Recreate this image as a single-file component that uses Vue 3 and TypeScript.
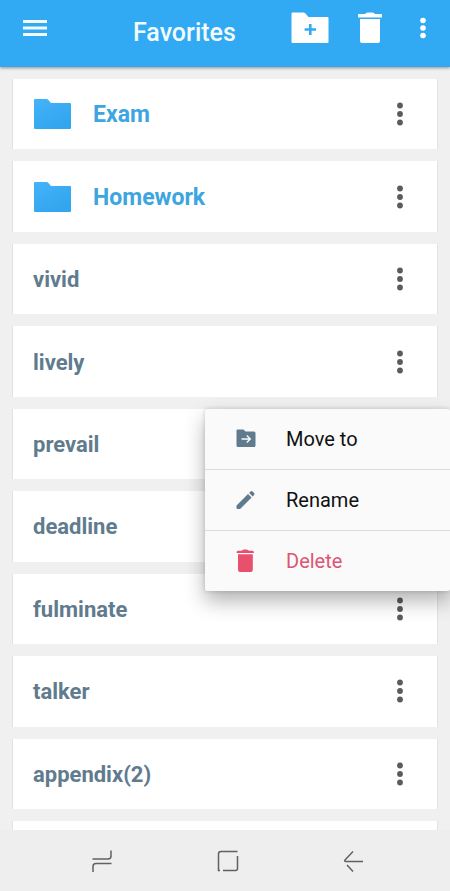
<script setup lang="ts">
import { ref } from 'vue'

interface Entry {
  name: string
  folder?: boolean
}

const entries: Entry[] = [
  { name: 'Exam', folder: true },
  { name: 'Homework', folder: true },
  { name: 'vivid' },
  { name: 'lively' },
  { name: 'prevail' },
  { name: 'deadline' },
  { name: 'fulminate' },
  { name: 'talker' },
  { name: 'appendix(2)' },
]

const openMenu = ref<string | null>('prevail')

function toggleMenu(name: string) {
  openMenu.value = openMenu.value === name ? null : name
}
</script>

<template>
  <div class="screen">
    <header class="app-bar">
      <button type="button" aria-label="Open navigation">
        <svg width="24" height="18" viewBox="0 0 24 18" fill="#f2fcff">
          <path d="M0 1h24v3H0zM0 7.5h24v3H0zM0 14h24v3H0z" />
        </svg>
      </button>
      <h1>Favorites</h1>
      <div class="actions">
        <button type="button" aria-label="New folder">
          <svg width="38" height="32" viewBox="0 0 38 32">
            <path fill="#fff" d="M1.5 0.5h11q1 0 1.7.8l3.3 3.7H36.500q1 0 1 1v24q0 1-1 1h-35q-1 0-1-1v-28.500q0-1 1-1z" />
            <path fill="#31a9f3" d="M18 12h2.600v4.200H25v2.600h-4.400V23H18v-4.200h-4.400v-2.600H18z" />
          </svg>
        </button>
        <button type="button" aria-label="Delete all">
          <svg width="24" height="32" viewBox="0 0 24 32" fill="#fff">
            <path d="M1 2h6q1-1.500 2.500-1.500h5q1.500 0 2.500 1.500h6q1 0 1 1v2.500H0V3q0-1 1-1z" />
            <path d="M2 7h20v22q0 2-2 2H4q-2 0-2-2z" />
          </svg>
        </button>
        <button type="button" aria-label="More options">
          <svg width="8" height="22" viewBox="0 0 8 22" fill="#fff">
            <circle cx="4" cy="3.500" r="2.800" />
            <circle cx="4" cy="11" r="2.800" />
            <circle cx="4" cy="18.500" r="2.800" />
          </svg>
        </button>
      </div>
    </header>

    <main class="content">
      <ul class="list">
        <li v-for="entry in entries" :key="entry.name" class="card">
          <svg v-if="entry.folder" class="folder-icon" width="38" height="32" viewBox="0 0 38 32">
            <defs>
              <linearGradient :id="'tone-' + entry.name" x1="0" y1="0" x2="0.600" y2="1">
                <stop offset="0" stop-color="#45b3fa" />
                <stop offset="1" stop-color="#31a5ee" />
              </linearGradient>
            </defs>
            <path
              :fill="`url(#tone-${entry.name})`"
              d="M2 1H13.500q1 0 1.700.8L18 5H37q1 0 1 1v24q0 1-1 1h-35q-1 0-1-1V2q0-1 1-1z"
            />
          </svg>
          <span class="name" :class="{ 'folder-name': entry.folder }">{{ entry.name }}</span>
          <button type="button" class="more" :aria-label="`Options for ${entry.name}`" @click="toggleMenu(entry.name)">
            <svg width="8" height="24" viewBox="0 0 8 24" fill="#5b5b5b">
              <circle cx="4" cy="3.500" r="2.900" />
              <circle cx="4" cy="12" r="2.900" />
              <circle cx="4" cy="20.500" r="2.900" />
            </svg>
          </button>

          <div v-if="openMenu === entry.name" class="menu" role="menu">
            <button type="button" role="menuitem">
              <svg width="20" height="24" viewBox="0 0 20 24">
                <path fill="#617b8e" d="M1.500 2.500h6l2 2H18q1.500 0 1.500 1.500v12.500q0 1.500-1.500 1.500H2q-1.500 0-1.500-1.500V3.500q0-1 1-1z" />
                <path fill="none" stroke="#fafafa" stroke-width="1.400" d="M5.500 12h8.500M10.800 8.500l3.500 3.500-3.500 3.500" />
              </svg>
              Move to
            </button>
            <button type="button" role="menuitem">
              <svg width="20" height="24" viewBox="0 0 20 24" fill="#617b8e">
                <path d="M.500 17.500 12 6l3.600 3.600L4.100 21H1.500q-1 0-1-1zM13.100 4.900l1.400-1.400q1-1 2 0l1.600 1.600q1 1 0 2l-1.400 1.400z" />
              </svg>
              Rename
            </button>
            <button type="button" role="menuitem" class="danger">
              <svg width="20" height="24" viewBox="0 0 20 24" fill="#e9506e">
                <path d="M2 1.800h3.500Q7 .500 8.500.500h1.500q1.500 0 3 1.300h3.500q1.500 0 1.500 2.200H.500q0-2.200 1.500-2.200z" />
                <path d="M2 5.200h14.800V21q0 2-2 2H4q-2 0-2-2z" />
              </svg>
              Delete
            </button>
          </div>
        </li>
        <li class="card" aria-hidden="true"></li>
      </ul>
    </main>

    <nav class="system-nav" aria-label="System">
      <button type="button" aria-label="Recent apps">
        <svg width="22" height="24" viewBox="0 0 22 24">
          <path d="M1.500 10H17q3 0 3-3V1.500M20.500 14.500H5q-3 0-3 3V23" />
        </svg>
      </button>
      <button type="button" aria-label="Home">
        <svg width="22" height="24" viewBox="0 0 22 24">
          <path d="M20.500 2.500H4q-2.500 0-2.500 2.500v16.500H3M20.500 7v12.500q0 2-2 2H6" />
        </svg>
      </button>
      <button type="button" aria-label="Back">
        <svg width="22" height="24" viewBox="0 0 22 24">
          <path d="M21 12.500H3.500q-1.500-.500-.500-1.500L11 2.500M5 16l6 6.500" />
        </svg>
      </button>
    </nav>
  </div>
</template>

<style>
body {
  margin: 0;
}
</style>

<style scoped>
.screen {
  display: flex;
  flex-direction: column;
  height: 100vh;
  overflow: hidden;
  background: #f0f0f0;
  font-family: Roboto, sans-serif;
}

button {
  display: flex;
  align-items: center;
  padding: 0;
  border: 0;
  background: none;
  font: inherit;
  cursor: pointer;
}

svg {
  display: block;
  flex: none;
}

.app-bar {
  display: flex;
  flex: none;
  align-items: center;
  box-sizing: border-box;
  height: 67px;
  padding: 0 23px 12px;
  background: #31a9f3;
  box-shadow: 0 1px 3px rgba(0, 0, 0, 0.4);
  z-index: 1;
}

h1 {
  margin: 0;
  padding: 10px 0 0 86px;
  color: #f2fcff;
  font-size: 25px;
  font-weight: 500;
  line-height: 30px;
}

.actions {
  display: flex;
  align-items: center;
  gap: 29px;
  margin-left: auto;
}

.actions button:last-child {
  margin-left: 8px;
}

.content {
  flex: 1;
  min-height: 0;
}

.list {
  display: grid;
  grid-template-rows: repeat(9, minmax(70px, 1fr)) 9px;
  gap: 12px;
  box-sizing: border-box;
  height: 100%;
  margin: 0;
  padding: 12px 13px 0;
  list-style: none;
}

.card {
  position: relative;
  display: flex;
  align-items: center;
  padding: 0 20px;
  background: #fff;
  box-shadow: -1px 0 #e2e2e2, 1px 0 #e2e2e2;
}

.folder-icon {
  margin-right: 22px;
}

.name {
  flex: 1;
  padding-top: 2px;
  color: #617b8e;
  font-size: 22px;
  font-weight: 700;
  line-height: 28px;
}

.folder-name {
  color: #3da5df;
  font-size: 23px;
}

.more {
  justify-content: center;
  width: 34px;
  height: 48px;
}

.menu {
  position: absolute;
  top: 0;
  right: -13px;
  z-index: 2;
  width: 245px;
  background: #fafafa;
  border-radius: 2px;
  box-shadow: 0 10px 20px rgba(0, 0, 0, 0.3), 0 0 4px rgba(0, 0, 0, 0.16);
}

.menu button {
  box-sizing: border-box;
  gap: 30px;
  width: 100%;
  height: 60px;
  padding: 0 31px;
  color: #111;
  font-size: 20px;
  line-height: 24px;
}

.menu button + button {
  height: 61px;
  border-top: 1px solid #dcdcdc;
}

.menu .danger {
  color: #dc5674;
}

.system-nav {
  display: flex;
  flex: none;
  align-items: center;
  justify-content: space-between;
  height: 61px;
  padding: 0 86px 0 91px;
  background: #eeeeee;
  z-index: 1;
}

.system-nav path {
  fill: none;
  stroke: #616161;
  stroke-width: 1.5;
}
</style>
